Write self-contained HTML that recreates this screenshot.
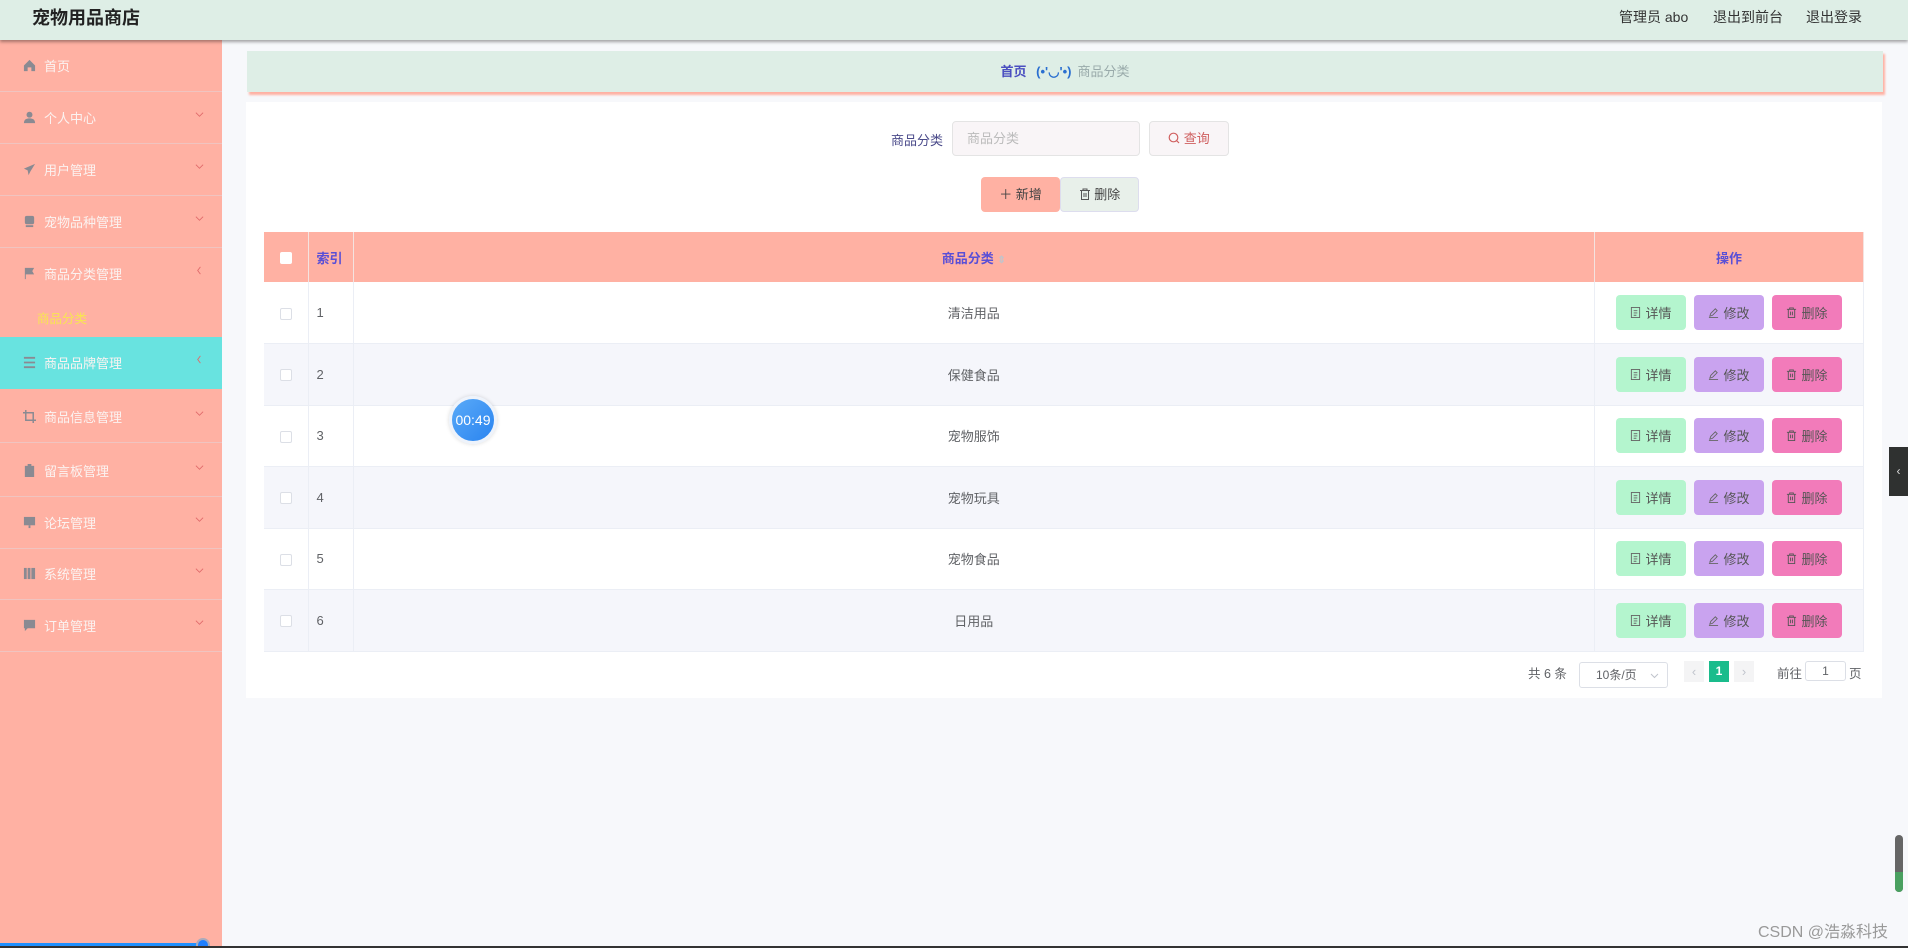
<!DOCTYPE html>
<html><head><meta charset="utf-8">
<style>
*{box-sizing:border-box;margin:0;padding:0}
body{width:1908px;height:948px;overflow:hidden;background:#f7f8fb;font-family:"Liberation Sans","Noto Sans CJK SC",sans-serif;position:relative;font-size:13px}
.hdr{position:absolute;left:0;top:0;width:1908px;height:40px;background:#deeee6;box-shadow:0 2px 3px rgba(0,0,0,.35);z-index:5}
.hdr .t{position:absolute;left:32px;top:4px;font-size:18px;font-weight:bold;color:#222}
.hdr .r{position:absolute;top:7px;font-size:14px;color:#333}
.side{position:absolute;left:0;top:40px;width:222px;height:908px;background:#ffb1a3}
.it{position:absolute;left:0;width:222px;height:52px;border-bottom:1.5px solid #f0c4c0;color:#fbf3f1;font-size:13px}
.it .ic{position:absolute;left:23px;top:19px;width:13px;height:13px}
.it .tx{position:absolute;left:44px;top:16px}
.it .ar{position:absolute;right:18px;top:18px;width:9px;height:9px}
.bc{position:absolute;left:247px;top:51px;width:1636px;height:41px;background:#deeee6;box-shadow:2px 3px 2px #ffb1a3;text-align:center;line-height:41px;font-size:13px}
.card{position:absolute;left:246px;top:102px;width:1636px;height:596px;background:#fff}
.btn{position:absolute;border-radius:4px;font-size:13px;text-align:center}
table{position:absolute;left:264px;top:232px;width:1600px;border-collapse:collapse;font-size:13px;color:#606266}
th{height:50px;background:#ffb1a3;color:#5a4fd6;font-weight:bold;border-right:1px solid #f4e3e0;vertical-align:middle}
td{height:61.5px;border-bottom:1px solid #ebeef5;border-right:1px solid #ebeef5;text-align:center;vertical-align:middle}
.cb{display:inline-block;width:12px;height:12px;border:1px solid #dcdfe6;background:#fff;border-radius:2px;vertical-align:middle}
.ob{display:inline-flex;align-items:center;justify-content:center;gap:4px;width:70px;height:35px;border-radius:4px;margin:0 4px 0 4px;color:#555;font-size:13px;vertical-align:middle}
.ob svg{width:11px;height:11px}
</style></head><body>
<div class="hdr"><div class="t">宠物用品商店</div>
<div class="r" style="left:1619px">管理员 abo</div><div class="r" style="left:1713px">退出到前台</div><div class="r" style="left:1806px">退出登录</div></div>

<svg width="0" height="0" style="position:absolute"><defs>
<symbol id="dn" viewBox="0 0 10 10"><path d="M1 3L5 7L9 3" stroke="#e06a6a" stroke-width="1" fill="none"/></symbol>
<symbol id="lf" viewBox="0 0 10 10"><path d="M6 1L3 5L6 9" stroke="#e06a6a" stroke-width="1" fill="none"/></symbol>
<symbol id="doc" viewBox="0 0 12 12"><rect x="1.5" y="0.5" width="9" height="11" stroke="#666" fill="none"/><path d="M4 4H8M4 6.5H8M4 9H7" stroke="#666"/></symbol>
<symbol id="pen" viewBox="0 0 12 12"><path d="M2 10L3 7L8 2L10 4L5 9Z M1 11.5H11" stroke="#666" fill="none"/></symbol>
<symbol id="bin" viewBox="0 0 12 12"><path d="M1 2.5H11M4 2.5V1H8V2.5M2.5 2.5V11.5H9.5V2.5M5 5V9M7 5V9" stroke="#555" fill="none"/></symbol>
</defs></svg>

<div class="side">
<div class="it" style="top:0"><svg class="ic" viewBox="0 0 14 14"><path d="M1 7L7 1L13 7V13H9V9H5V13H1Z" fill="#8a8a92"/></svg><span class="tx">首页</span></div>
<div class="it" style="top:52px"><svg class="ic" viewBox="0 0 14 14"><circle cx="7" cy="4" r="3.2" fill="#8a8a92"/><path d="M1 13C1 9 4 8 7 8S13 9 13 13Z" fill="#8a8a92"/></svg><span class="tx">个人中心</span><svg class="ar"><use href="#dn"/></svg></div>
<div class="it" style="top:104px"><svg class="ic" viewBox="0 0 14 14"><path d="M13 1L1 6L5 8L6 13L8 9Z" fill="#8a8a92"/></svg><span class="tx">用户管理</span><svg class="ar"><use href="#dn"/></svg></div>
<div class="it" style="top:156px"><svg class="ic" viewBox="0 0 14 14"><rect x="2" y="1" width="10" height="9" rx="2" fill="#8a8a92"/><rect x="3" y="11" width="8" height="2" fill="#8a8a92"/></svg><span class="tx">宠物品种管理</span><svg class="ar"><use href="#dn"/></svg></div>
<div class="it" style="top:208px;border:none"><svg class="ic" viewBox="0 0 14 14"><path d="M2 1H3V13H2ZM3 1H12L10 4.5L12 8H3Z" fill="#8a8a92"/></svg><span class="tx">商品分类管理</span><svg class="ar"><use href="#lf"/></svg></div>
<div style="position:absolute;left:37px;top:268px;color:#f8e651;font-size:12.5px">商品分类</div>
<div class="it" style="top:297px;background:#68e3e0;border:none"><svg class="ic" viewBox="0 0 14 14"><path d="M1 2H13M1 7H13M1 12H13" stroke="#8a8a92" stroke-width="2"/></svg><span class="tx">商品品牌管理</span><svg class="ar"><use href="#lf"/></svg></div>
<div class="it" style="top:351px"><svg class="ic" viewBox="0 0 14 14"><path d="M3 0V11H14M0 3H11V14" stroke="#8a8a92" stroke-width="1.6" fill="none"/></svg><span class="tx">商品信息管理</span><svg class="ar"><use href="#dn"/></svg></div>
<div class="it" style="top:405px"><svg class="ic" viewBox="0 0 14 14"><rect x="2" y="2" width="10" height="12" fill="#8a8a92"/><rect x="5" y="0" width="4" height="3" fill="#8a8a92"/></svg><span class="tx">留言板管理</span><svg class="ar"><use href="#dn"/></svg></div>
<div class="it" style="top:457px"><svg class="ic" viewBox="0 0 14 14"><rect x="1" y="1" width="12" height="9" fill="#8a8a92"/><rect x="6" y="10" width="2" height="3" fill="#8a8a92"/></svg><span class="tx">论坛管理</span><svg class="ar"><use href="#dn"/></svg></div>
<div class="it" style="top:508px"><svg class="ic" viewBox="0 0 14 14"><rect x="1" y="1" width="3" height="12" fill="#8a8a92"/><rect x="5" y="1" width="3" height="12" fill="#8a8a92"/><rect x="9" y="1" width="4" height="12" fill="#8a8a92"/></svg><span class="tx">系统管理</span><svg class="ar"><use href="#dn"/></svg></div>
<div class="it" style="top:560px"><svg class="ic" viewBox="0 0 14 14"><path d="M1 1H13V10H5L2 13V10H1Z" fill="#8a8a92"/></svg><span class="tx">订单管理</span><svg class="ar"><use href="#dn"/></svg></div>
<div style="position:absolute;left:0;top:903px;width:205px;height:5px;background:#1e90ff"></div>
<div style="position:absolute;left:196px;top:898px;width:14px;height:10px;border-radius:7px 7px 0 0;background:#1e7fff;border:2px solid #aab"></div>
</div>

<div class="bc"><span style="color:#4a4fc0;font-weight:bold">首页</span> <span style="color:#2a6fd0;font-weight:bold;margin:0 6px">(•'◡'•)</span><span style="color:#9aa">商品分类</span></div>

<div class="card"></div>
<div style="position:absolute;left:891px;top:130px;color:#4a4a8a;font-size:13px">商品分类</div>
<div class="btn" style="left:952px;top:121px;width:188px;height:35px;border:1px solid #e4e4e4;background:#f9f5f7;text-align:left;padding-left:14px;line-height:33px;color:#bbb">商品分类</div>
<div class="btn" style="left:1149px;top:121px;width:80px;height:35px;border:1px solid #e4e4e4;background:#f9f5f7;line-height:33px;color:#d06060"><svg width="12" height="12" viewBox="0 0 12 12" style="vertical-align:-1px"><circle cx="5.5" cy="5.5" r="4.3" stroke="#d06060" fill="none" stroke-width="1.2"/><path d="M8.5 8.5L11 11" stroke="#d06060" stroke-width="1.2"/></svg> 查询</div>
<div class="btn" style="left:981px;top:177px;width:79px;height:35px;background:#ffb1a3;line-height:35px;color:#444">＋ 新增</div>
<div class="btn" style="left:1060px;top:177px;width:79px;height:35px;background:#e8f0ea;border:1px solid #dde;line-height:33px;color:#444"><svg width="12" height="12" style="vertical-align:-1px"><use href="#bin"/></svg> 删除</div>

<table>
<tr><th style="width:44px"><span class="cb" style="border:none"></span></th><th style="width:45px;text-align:left;padding-left:8px">索引</th><th>商品分类 <span style="color:#c0c4cc;font-size:10px">⇕</span></th><th style="width:269px">操作</th></tr>
<tr><td><span class="cb"></span></td><td style="text-align:left;padding-left:8px">1</td><td>清洁用品</td><td>OPS</td></tr>
<tr><td><span class="cb"></span></td><td style="text-align:left;padding-left:8px">2</td><td>保健食品</td><td>OPS</td></tr>
<tr><td><span class="cb"></span></td><td style="text-align:left;padding-left:8px">3</td><td>宠物服饰</td><td>OPS</td></tr>
<tr><td><span class="cb"></span></td><td style="text-align:left;padding-left:8px">4</td><td>宠物玩具</td><td>OPS</td></tr>
<tr><td><span class="cb"></span></td><td style="text-align:left;padding-left:8px">5</td><td>宠物食品</td><td>OPS</td></tr>
<tr><td><span class="cb"></span></td><td style="text-align:left;padding-left:8px">6</td><td>日用品</td><td>OPS</td></tr>
</table>
<script>
document.querySelectorAll('td').forEach(function(t){if(t.textContent==='OPS')t.innerHTML='<span class="ob" style="background:#b4f5ce"><svg><use href="#doc"/></svg>详情</span><span class="ob" style="background:#c9a3ef"><svg><use href="#pen"/></svg>修改</span><span class="ob" style="background:#f27bba"><svg><use href="#bin"/></svg>删除</span>';});
var rows=document.querySelectorAll('tr');
rows.forEach(function(r,i){if(i>0){var bg=(i%2===1)?'#ffffff':'#f5f6fb';r.querySelectorAll('td').forEach(function(t){t.style.background=bg;});}});
</script>

<div style="position:absolute;left:1528px;top:663px;color:#606266;font-size:12.5px">共 6 条</div>
<div style="position:absolute;left:1579px;top:662px;width:89px;height:26px;border:1px solid #dcdfe6;border-radius:3px;color:#606266;font-size:12px;line-height:24px;padding-left:16px">10条/页<svg style="position:absolute;right:8px;top:8px" width="9" height="9"><path d="M1 3L4.5 6.5L8 3" stroke="#c0c4cc" fill="none"/></svg></div>
<div style="position:absolute;left:1684px;top:661px;width:20px;height:21px;background:#f4f4f5;color:#c0c4cc;text-align:center;line-height:21px">‹</div>
<div style="position:absolute;left:1709px;top:661px;width:20px;height:21px;background:#1abc8c;color:#fff;text-align:center;line-height:21px;font-weight:bold;font-size:12px">1</div>
<div style="position:absolute;left:1734px;top:661px;width:20px;height:21px;background:#f4f4f5;color:#c0c4cc;text-align:center;line-height:21px">›</div>
<div style="position:absolute;left:1777px;top:663px;color:#606266;font-size:12.5px">前往</div>
<div style="position:absolute;left:1805px;top:661px;width:41px;height:20px;border:1px solid #dcdfe6;border-radius:3px;text-align:center;font-size:12px;line-height:18px;color:#606266">1</div>
<div style="position:absolute;left:1849px;top:663px;color:#606266;font-size:12.5px">页</div>

<div style="position:absolute;left:449px;top:396px;width:48px;height:48px;border-radius:50%;background:linear-gradient(135deg,#5aaaf8,#2a84f0);border:3px solid #eef3fb;box-shadow:0 0 4px rgba(0,0,0,.15);color:#fff;text-align:center;line-height:42px;font-size:14px">00:49</div>

<div style="position:absolute;left:1889px;top:447px;width:19px;height:49px;background:#2f3130;color:#ddd;text-align:center;line-height:49px;font-size:12px">‹</div>
<div style="position:absolute;left:1895px;top:835px;width:8px;height:57px;border-radius:4px;background:#666"></div>
<div style="position:absolute;left:1895px;top:872px;width:8px;height:20px;border-radius:0 0 4px 4px;background:#4aa060"></div>
<div style="position:absolute;left:1758px;top:918px;color:#999;font-size:16px">CSDN @浩淼科技</div>
<div style="position:absolute;left:0;top:946px;width:1908px;height:2px;background:#333"></div>
</body></html>
